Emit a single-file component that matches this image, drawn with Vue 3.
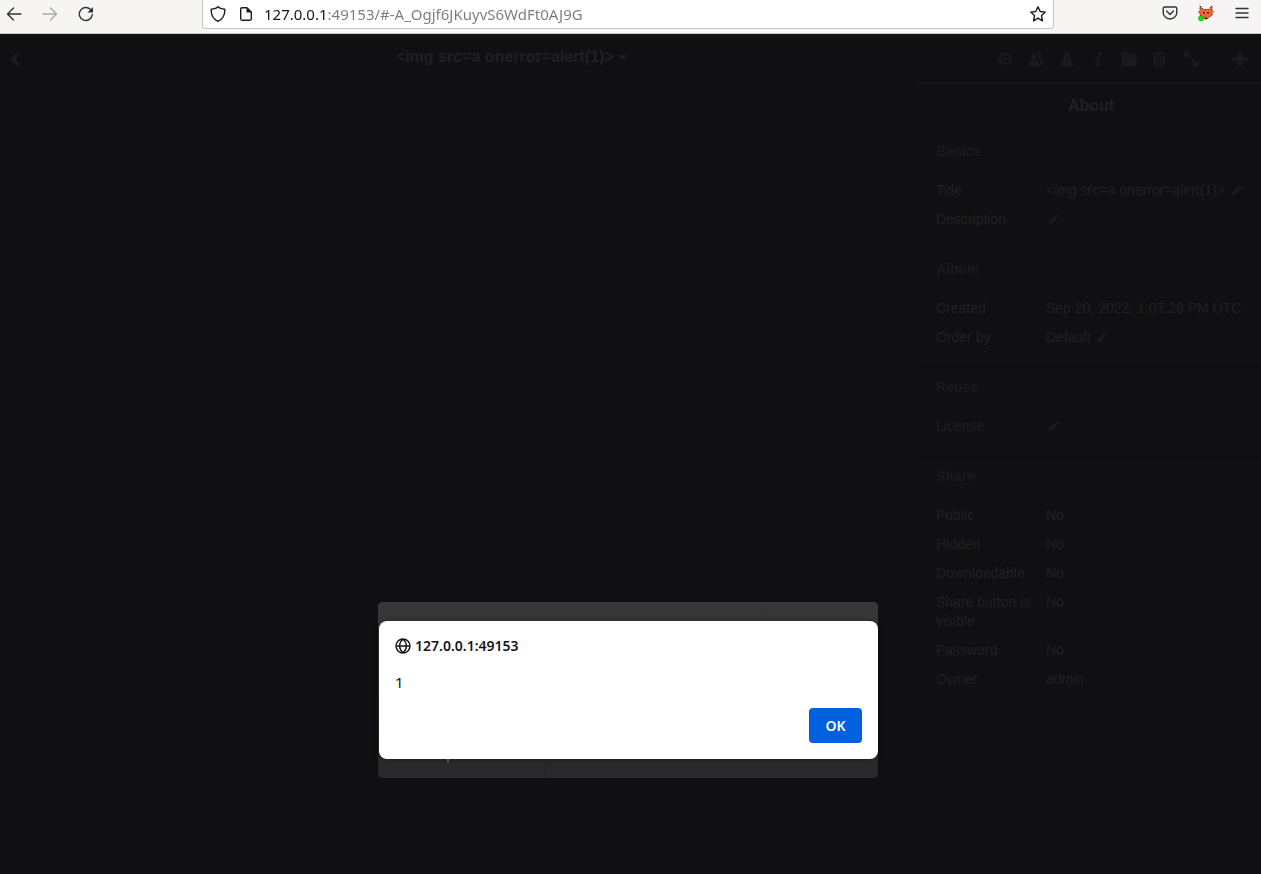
<template>
    <div class="browser">
        <header class="chrome">
            <nav class="chrome-nav">
                <button aria-label="Back">
                    <svg width="16" height="16" viewBox="0 0 16 16" class="line"><path d="M15 8H2M7.500 2L1.500 8l6 6" /></svg>
                </button>
                <button aria-label="Forward" disabled>
                    <svg width="16" height="16" viewBox="0 0 16 16" class="line"><path d="M1 8h13M8.500 2l6 6-6 6" /></svg>
                </button>
                <button aria-label="Reload">
                    <svg width="16" height="16" viewBox="0 0 16 16">
                        <path class="line" d="M14.300 8.500A6.500 6.500 0 1 1 12.500 3.500" />
                        <path d="M15 1v5.500H9.500z" fill="currentColor" />
                    </svg>
                </button>
            </nav>
            <div class="urlbar">
                <svg width="16" height="16" viewBox="0 0 16 16" class="line"><path d="M8 .8C6.500 2.500 4 3 1.200 3.200 1 8.500 2.800 13 8 15.300 13.200 13 15 8.500 14.800 3.200 12 3 9.500 2.500 8 .8z" /></svg>
                <svg width="16" height="16" viewBox="0 0 16 16">
                    <path class="line" d="M9 1.700H4A1.500 1.500 0 0 0 2.700 3v10A1.500 1.500 0 0 0 4 14.300h8a1.500 1.500 0 0 0 1.300-1.300V6z" />
                    <path d="M8.500 1.500v5h5z" fill="currentColor" />
                </svg>
                <input v-model="url" type="text" aria-label="Address" spellcheck="false" />
                <button aria-label="Bookmark">
                    <svg width="16" height="16" viewBox="0 0 16 16" class="line"><path d="M8 .8l2.200 4.700 5.100.6-3.800 3.500 1 5.200L8 12.200l-4.500 2.600 1-5.200L.7 6.100l5.100-.6z" /></svg>
                </button>
            </div>
            <div class="chrome-tools">
                <button aria-label="Pocket">
                    <svg width="16" height="16" viewBox="0 0 16 16" class="line"><path d="M2.500 2h11A1.500 1.500 0 0 1 14.800 3.500V7.500a6.800 6.500 0 0 1-13.600 0V3.500A1.500 1.500 0 0 1 2.500 2zM4.500 6L8 9.500 11.500 6" /></svg>
                </button>
                <button aria-label="FoxyProxy">
                    <svg width="16" height="16" viewBox="0 0 16 16">
                        <path d="M2 .8L5.500 4.500h5L14 .8v4.700L15.500 7 14 8.500v2L11 12l-1.500 2h-3L5 12l-3-1.500v-2L.5 7 2 5.500z" fill="#ff6430" stroke="#4a2018" stroke-width=".9" stroke-dasharray="2 1" />
                        <path d="M5 7h2v1.500H5zM9 7h2v1.500H9zM7 12.500h2V14H7z" fill="#2b2020" />
                        <circle cx="3" cy="13.300" r="2.600" fill="#0bea0b" stroke="#087008" stroke-width=".4" />
                    </svg>
                </button>
                <button aria-label="Menu">
                    <svg width="16" height="16" viewBox="0 0 16 16" class="line"><path d="M2 3.500h12M2 8h12M2 12.500h12" /></svg>
                </button>
            </div>
        </header>

        <div class="app">
            <div class="toolbar">
                <button class="back" aria-label="Close album">
                    <svg width="16" height="16" viewBox="0 0 16 16"><path d="M9.500.5L12.300 3.300 7.600 8l4.700 4.700L9.500 15.500 2 8z" /></svg>
                </button>
                <h1>{{ album }} <i class="caret"></i></h1>
                <div class="actions">
                    <button v-for="icon in icons" :key="icon.name" :class="icon.name" :aria-label="icon.name">
                        <svg width="16" height="16" viewBox="0 0 16 16"><path fill-rule="evenodd" :d="icon.path" /></svg>
                    </button>
                </div>
            </div>

            <div class="content">
                <main></main>
                <aside class="sidebar">
                    <h2>About</h2>
                    <section v-for="section in sections" :key="section.title">
                        <h3>{{ section.title }}</h3>
                        <table>
                            <tbody>
                                <tr v-for="row in section.rows" :key="row.label">
                                    <th scope="row">{{ row.label }}</th>
                                    <td>
                                        {{ row.value }}
                                        <button v-if="row.edit" class="edit" :aria-label="'Edit ' + row.label">
                                            <svg width="10" height="10" viewBox="0 0 10 10"><path d="M0 10V7.500l5.500-5.500L8 4.500 2.500 10zM6.300 1.200L7.500 0 10 2.500 8.800 3.700z" /></svg>
                                        </button>
                                    </td>
                                </tr>
                            </tbody>
                        </table>
                    </section>
                </aside>
            </div>
        </div>

        <div v-if="showAlert" class="overlay">
            <div class="modal">
                <div class="alert" role="alertdialog" aria-labelledby="alert-host">
                    <h4 id="alert-host">
                        <svg width="16" height="16" viewBox="0 0 16 16" class="line"><path d="M8 1a7 7 0 1 0 0 14A7 7 0 1 0 8 1zM8 1C3.500 5 3.500 11 8 15 12.500 11 12.500 5 8 1zM1 8h14" /></svg>
                        127.0.0.1:49153
                    </h4>
                    <p>1</p>
                    <button class="ok" @click="showAlert = false">OK</button>
                </div>
                <div class="modal-footer"><span></span></div>
            </div>
        </div>
    </div>
</template>

<script setup>
import { ref } from 'vue'

const url = ref('127.0.0.1:49153/#-A_Ogjf6JKuyvS6WdFt0AJ9G')
const album = '<img src=a onerror=alert(1)>'
const showAlert = ref(true)

const icons = [
    { name: 'visibility', path: 'M8 2C4.500 2 2 4.200.5 8 2 11.800 4.500 14 8 14s6-2.200 7.500-6C14 4.200 11.500 2 8 2zM8 4a4 4 0 1 1 0 8 4 4 0 1 1 0-8zM8 6.200a1.800 1.800 0 1 0 0 3.600 1.800 1.800 0 1 0 0-3.600z' },
    { name: 'people', path: 'M5.800 2.500a2.800 3.300 0 1 1 0 6.600 2.800 3.300 0 1 1 0-6.600zM.5 15.500v-3c0-1.500 1-2.500 2.500-2.500h5.500c1.500 0 2.500 1 2.500 2.500v3zM8.500 1C11 0 13.500 1 13.500 4c0 2-1.200 3.500-3 3.500C10.200 5 9.800 3 8.500 1zM12.200 14h3.300v-3c0-1.500-1-2.500-2.500-2.500h-2c1.300 1.200 1.200 3 1.200 5.500z' },
    { name: 'warning', path: 'M7 .5h2l6 15H1zM7 5.500h2v5H7zM7 12h2v2H7z' },
    { name: 'info', path: 'M10.500.5a2 2 0 1 1 0 4 2 2 0 1 1 0-4zM4 7.500C6.500 4.500 10.500 5 9.800 8.500L8.300 13c0 1 1.700.5 3.200-.5-1.500 3.500-6 4.500-5.500 1L7.800 8.500c0-1.200-1.500-1-3-.3z' },
    { name: 'move', path: 'M.5.500h5l1.500 2h8.500v2H.5zM.5 5.500h15v10H.5z' },
    { name: 'trash', path: 'M5.500.5h4v2h5V4H.5V2.500h5zM2 5.500h11v10H2zM4.300 6.800V14h1.400V6.800zM6.800 6.800V14h1.400V6.800zM9.300 6.800V14h1.400V6.800z' },
    { name: 'fullscreen', path: 'M.5.500h7L5.200 2.800l3 3L6 8 3 5 .5 7.500zM15.500 15.500h-7l2.300-2.300-3-3L10 8l3 3 2.500-2.500z' },
    { name: 'add', path: 'M6.200.5h3.600v5.700h5.700v3.600H9.800v5.700H6.200V9.800H.5V6.200h5.700z' }
]

const sections = [
    {
        title: 'Basics',
        rows: [
            { label: 'Title', value: album, edit: true },
            { label: 'Description', value: '', edit: true }
        ]
    },
    {
        title: 'Album',
        rows: [
            { label: 'Created', value: 'Sep 20, 2022, 1:07:26 PM UTC' },
            { label: 'Order by', value: 'Default', edit: true }
        ]
    },
    {
        title: 'Reuse',
        rows: [{ label: 'License', value: '', edit: true }]
    },
    {
        title: 'Share',
        rows: [
            { label: 'Public', value: 'No' },
            { label: 'Hidden', value: 'No' },
            { label: 'Downloadable', value: 'No' },
            { label: 'Share button is visible', value: 'No' },
            { label: 'Password', value: 'No' },
            { label: 'Owner', value: 'admin' }
        ]
    }
]
</script>

<style>
body {
    margin: 0;
    background: #101012;
}
</style>

<style scoped>
.browser {
    position: relative;
    display: flex;
    flex-direction: column;
    min-height: 100vh;
    font-family: "Liberation Sans", Arial, sans-serif;
    font-size: 14px;
    color: #202022;
}
button {
    display: flex;
    padding: 0;
    border: none;
    background: none;
    color: inherit;
    cursor: pointer;
}
.line {
    fill: none;
    stroke: currentColor;
    stroke-width: 1.4;
    stroke-linejoin: round;
    stroke-linecap: round;
}

.chrome {
    display: flex;
    align-items: flex-start;
    justify-content: space-between;
    height: 33px;
    background: #f6f5f4;
    border-bottom: 1px solid #cdc7c2;
    color: #2e3436;
}
.chrome-nav {
    display: flex;
    gap: 20px;
    width: 190px;
    padding: 6px;
}
.chrome-nav button:disabled {
    color: #a9abab;
}
.urlbar {
    flex: 1;
    display: flex;
    align-items: center;
    gap: 12px;
    height: 29px;
    padding: 0 7px;
    box-sizing: border-box;
    background: #fff;
    border: 1px solid #cdc7c2;
    border-top: none;
    border-radius: 0 0 4px 4px;
}
.urlbar svg {
    flex: none;
    color: #1c1c20;
}
.urlbar input {
    flex: 1;
    min-width: 0;
    margin-left: -2px;
    padding: 0;
    border: none;
    outline: none;
    font-family: "Noto Sans", sans-serif;
    font-size: 15px;
    /* host part is dark, port and hash are dimmed */
    color: transparent;
    background: linear-gradient(to right, #15141a 62px, #7b7b7e 62px);
    background-clip: text;
}
.chrome-tools {
    display: flex;
    justify-content: flex-end;
    gap: 20px;
    width: 188px;
    padding: 5px 11px 5px 8px;
}

.app {
    flex: 1;
    display: flex;
    flex-direction: column;
    background: #101012;
}
.toolbar {
    display: flex;
    align-items: center;
    height: 49px;
    color: #1b1b1d;
    fill: currentColor;
}
.back {
    padding-left: 8px;
    width: 40px;
    box-sizing: border-box;
}
h1 {
    flex: 1;
    margin: 0;
    padding-bottom: 4px;
    font-size: 16px;
    line-height: 20px;
    text-align: center;
    color: #202022;
}
.caret {
    display: inline-block;
    vertical-align: middle;
    border: 5px solid transparent;
    border-top-color: #1e1e20;
    border-bottom: none;
}
.actions {
    display: flex;
    gap: 15px;
    padding: 0 13px;
}
.actions .add {
    margin-left: 18px;
}
.actions .info {
    color: #111c2e;
}

.content {
    flex: 1;
    display: flex;
}
main {
    flex: 1;
}
.sidebar {
    width: 344px;
    border-top: 1px solid #1a1a1c;
}
h2 {
    margin: 0;
    padding: 12px 0 15px 4px;
    font-size: 16px;
    line-height: 20px;
    text-align: center;
}
section {
    padding: 10px 16px 15px 19px;
    border-top: 1px solid #0e0e10;
}
h3 {
    margin: 0 0 15px;
    font-size: 14px;
    line-height: 19px;
    color: #1a1a1c;
}
table {
    width: 100%;
    border-collapse: collapse;
}
th,
td {
    padding: 5px 0;
    line-height: 19px;
    text-align: left;
    vertical-align: top;
    font-weight: 400;
    white-space: nowrap;
}
th {
    width: 110px;
    padding-right: 12px;
    box-sizing: border-box;
    white-space: normal;
}
.edit {
    display: inline-block;
    margin-left: 3px;
    fill: #1b1b1d;
}

.overlay {
    position: absolute;
    inset: 34px 0 0;
    display: flex;
    justify-content: center;
    align-items: flex-end;
    padding: 0 5px 96px 0;
}
.modal {
    width: 500px;
    padding-top: 19px;
    background: linear-gradient(#373739, #29292b);
    border-radius: 5px;
    box-shadow: inset 0 1px 0 #3b3b3d;
}
.alert {
    margin-left: 1px;
    padding: 16px;
    background: #fff;
    border-radius: 8px;
    box-shadow: 0 1px 6px rgba(0, 0, 0, 0.3);
    font-family: "Noto Sans", sans-serif;
    color: #15141a;
}
h4 {
    display: flex;
    align-items: center;
    gap: 4px;
    margin: 0;
    font-size: 14px;
    line-height: 18px;
    font-weight: 600;
}
.alert p {
    margin: 16px 0 14px;
    font-size: 15px;
    line-height: 23px;
}
.ok {
    justify-content: center;
    width: 53px;
    margin-left: auto;
    background: #0061e0;
    color: #fbfbfe;
    border-radius: 4px;
    font-family: inherit;
    font-size: 14px;
    font-weight: 600;
    line-height: 35px;
}
.modal-footer {
    width: 167px;
    height: 19px;
    border-right: 1px solid #232325;
}
.modal-footer span {
    display: block;
    width: 2px;
    height: 3px;
    margin-left: 69px;
    background: #5c5c5e;
}
</style>
